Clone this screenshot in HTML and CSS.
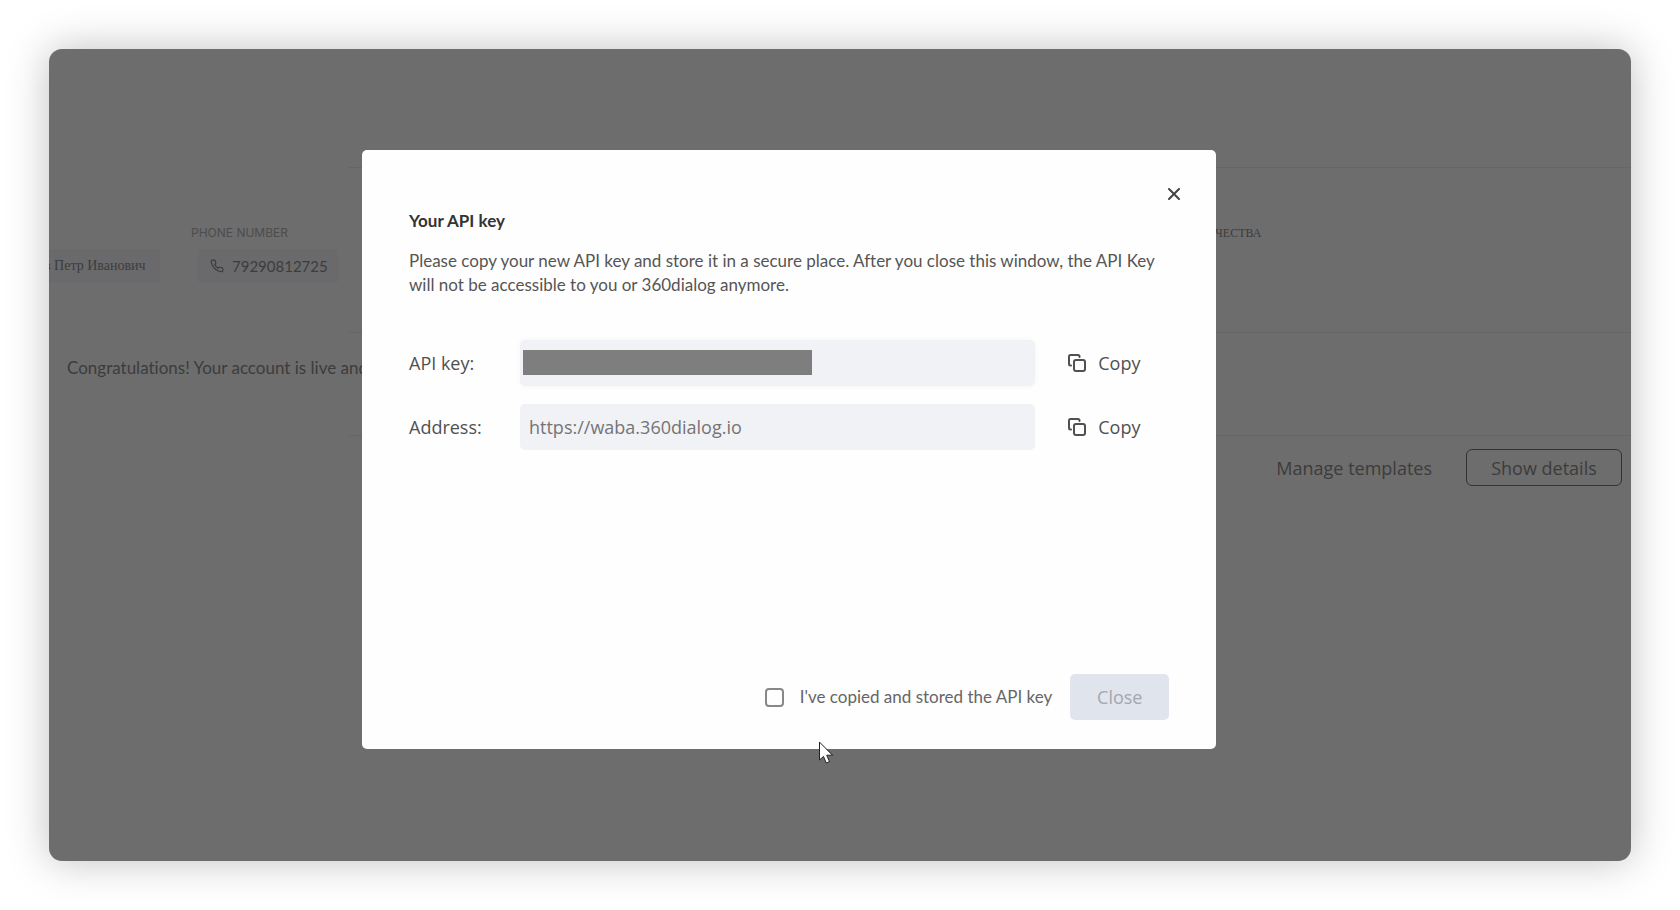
FILE: index.html
```html
<!DOCTYPE html>
<html lang="en">
<head>
<meta charset="utf-8">
<title>Your API key</title>
<link rel="stylesheet" href="styles.css">
</head>
<body>
<div class="frame">
  <main class="page">
    <header class="page-header"></header>
    <section class="row account">
      <div class="owner"><span class="chip serif">в Петр Иванович</span></div>
      <div class="phone">
        <span class="caption">PHONE NUMBER</span>
        <span class="chip phone-chip">
          <svg class="phone-icon" viewBox="0 0 24 24" aria-hidden="true"><path d="M22 16.9v3a2 2 0 0 1-2.2 2 19.8 19.8 0 0 1-8.6-3.1 19.5 19.5 0 0 1-6-6A19.8 19.8 0 0 1 2.1 4.200A2 2 0 0 1 4.100 2h3a2 2 0 0 1 2 1.700c.1 1 .4 1.900.7 2.800a2 2 0 0 1-.5 2.100L8.100 9.900a16 16 0 0 0 6 6l1.300-1.300a2 2 0 0 1 2.100-.4c.9.3 1.800.6 2.800.7a2 2 0 0 1 1.700 2z"/></svg>
          79290812725
        </span>
      </div>
      <div class="city serif">ЧЕСТВА</div>
    </section>
    <section class="row notice">Congratulations! Your account is live and</section>
    <section class="row actions">
      <button class="text-button" type="button">Manage templates</button>
      <button class="outline-button" type="button">Show details</button>
    </section>
  </main>

  <div class="dialog" role="dialog" aria-labelledby="dialog-title">
    <button class="dismiss" type="button" aria-label="Dismiss">
      <svg viewBox="0 0 12 12" aria-hidden="true"><path d="M1 1l10 10M11 1L1 11"/></svg>
    </button>
    <h1 id="dialog-title">Your API key</h1>
    <p>Please copy your new API key and store it in a secure place. After you close this window, the API Key will not be accessible to you or 360dialog anymore.</p>
    <div class="fields">
      <label for="key">API key:</label>
      <div class="field soft"><input id="key" type="text" readonly><span class="mask"></span></div>
      <button class="copy" type="button">
        <svg viewBox="0 0 18 18" aria-hidden="true"><rect x="6" y="6" width="11" height="11" rx="2"/><path d="M3 11.500H2.500A1.500 1.500 0 0 1 1 10V2.500A1.500 1.500 0 0 1 2.500 1H10A1.500 1.500 0 0 1 11.500 2.500V3"/></svg>
        Copy
      </button>
      <label for="address">Address:</label>
      <div class="field"><input id="address" type="text" value="https://waba.360dialog.io" readonly></div>
      <button class="copy" type="button">
        <svg viewBox="0 0 18 18" aria-hidden="true"><rect x="6" y="6" width="11" height="11" rx="2"/><path d="M3 11.500H2.500A1.500 1.500 0 0 1 1 10V2.500A1.500 1.500 0 0 1 2.500 1H10A1.500 1.500 0 0 1 11.500 2.500V3"/></svg>
        Copy
      </button>
    </div>
    <footer class="dialog-footer">
      <label class="confirm"><input type="checkbox">I've copied and stored the API key</label>
      <button class="close" type="button" disabled>Close</button>
    </footer>
    <svg class="cursor" viewBox="0 0 16 24" aria-hidden="true"><path d="M1.500 1.500V19l4-3.600L8.200 22l3.300-1.400-2.800-6.400h5.500z"/></svg>
  </div>
</div>
</body>
</html>
```
FILE: styles.css
```css
* { box-sizing: border-box; }

body {
  margin: 0;
  padding: 49px;
  background: #fff;
  color: #444;
  font: 17px/24px Lato, "Noto Sans", sans-serif;
  font-variant-ligatures: none;
}

button, input { font: inherit; color: inherit; }
button { border: 0; background: none; padding: 0; }
svg { fill: none; stroke: currentColor; stroke-linecap: round; stroke-linejoin: round; }

.frame {
  position: relative;
  min-height: calc(100vh - 98px);
  border-radius: 13px;
  background: #6d6d6d;
  box-shadow: 0 0 42px rgba(0, 0, 0, 0.25);
}

.page {
  color: #3c3c3c;
  overflow: hidden;
}

.page-header { height: 118px; }

.row {
  display: flex;
  background: linear-gradient(#666, #666) top right / calc(100% - 300px) 1px no-repeat;
}

.account {
  height: 165px;
  padding-top: 54px;
  align-items: flex-start;
}

.serif { font-family: "Liberation Serif", serif; }

.chip {
  display: flex;
  align-items: center;
  height: 34px;
  border-radius: 4px;
  background: #6a6a6c;
  color: #3c3c3c;
  font-size: 15px;
}

.owner {
  width: 142px;
  padding-top: 28px;
}

.owner .chip {
  width: 116px;
  margin-left: -5px;
  font-size: 14px;
  white-space: nowrap;
}

.phone { flex: 1; }

.caption {
  display: block;
  height: 28px;
  font: 12px/24px Inter, sans-serif;
  color: #4c4c4c;
}

.phone-chip {
  width: 140px;
  margin-left: 7px;
  padding-left: 12px;
  gap: 8px;
}

.phone-icon { width: 14px; height: 14px; stroke-width: 2; }

.city {
  width: 416px;
  font-size: 12px;
}

.notice {
  height: 103px;
  padding: 24px 18px;
}

.actions {
  height: 66px;
  padding: 14px 9px 15px 0;
  justify-content: flex-end;
  gap: 34px;
  font-family: "Open Sans", sans-serif;
  font-size: 18px;
}

.outline-button {
  width: 156px;
  border: 1px solid #333;
  border-radius: 6px;
}

.dialog {
  position: absolute;
  top: 101px;
  left: 313px;
  width: 54%;
  min-height: 599px;
  padding: 59px 47px 29px;
  display: flex;
  flex-direction: column;
  border-radius: 5px;
  background: #fefefe;
}

.dialog h1 {
  margin: 0 0 16px;
  font-size: 17px;
  line-height: 24px;
  color: #333;
}

.dialog p { margin: 0 0 43px; color: #555; }

.dismiss {
  position: absolute;
  top: 33px;
  right: 31px;
  width: 22px;
  height: 22px;
  display: grid;
  place-items: center;
}

.dismiss svg { width: 12px; height: 12px; stroke-width: 2; }

.fields {
  display: grid;
  grid-template-columns: 111px 1fr 134px;
  row-gap: 18px;
  align-items: center;
  font-family: "Open Sans", sans-serif;
  font-size: 18px;
  color: #505050;
}

.field {
  position: relative;
  height: 46px;
  border-radius: 5px;
  background: #f1f2f6;
}

.soft { box-shadow: 0 0 6px #f5f6f9; }

.field input {
  width: 100%;
  height: 100%;
  padding: 0 9px;
  border: 0;
  background: none;
  color: #747474;
}

.mask {
  position: absolute;
  top: 10px;
  left: 3px;
  width: 56%;
  height: 25px;
  background: #7e7e7e;
}

.copy {
  display: flex;
  align-items: center;
  gap: 12px;
  padding-left: 33px;
  white-space: nowrap;
}

.copy svg { width: 18px; height: 18px; flex: none; stroke-width: 2; }

.dialog-footer {
  display: flex;
  justify-content: flex-end;
  align-items: center;
  gap: 18px;
  margin-top: auto;
}

.confirm {
  display: flex;
  align-items: center;
  gap: 16px;
  color: #666;
}

.confirm input {
  appearance: none;
  width: 19px;
  height: 19px;
  margin: 0;
  border: 2px solid #888;
  border-radius: 4px;
}

.close {
  width: 99px;
  height: 46px;
  border-radius: 5px;
  background: #e0e4ec;
  color: #a3a8b0;
  font-family: "Open Sans", sans-serif;
  font-size: 18px;
}

.cursor {
  position: absolute;
  left: 456px;
  bottom: -16px;
  width: 16px;
  height: 24px;
  fill: #fff;
  stroke: #222;
  stroke-width: 1;
}
```
